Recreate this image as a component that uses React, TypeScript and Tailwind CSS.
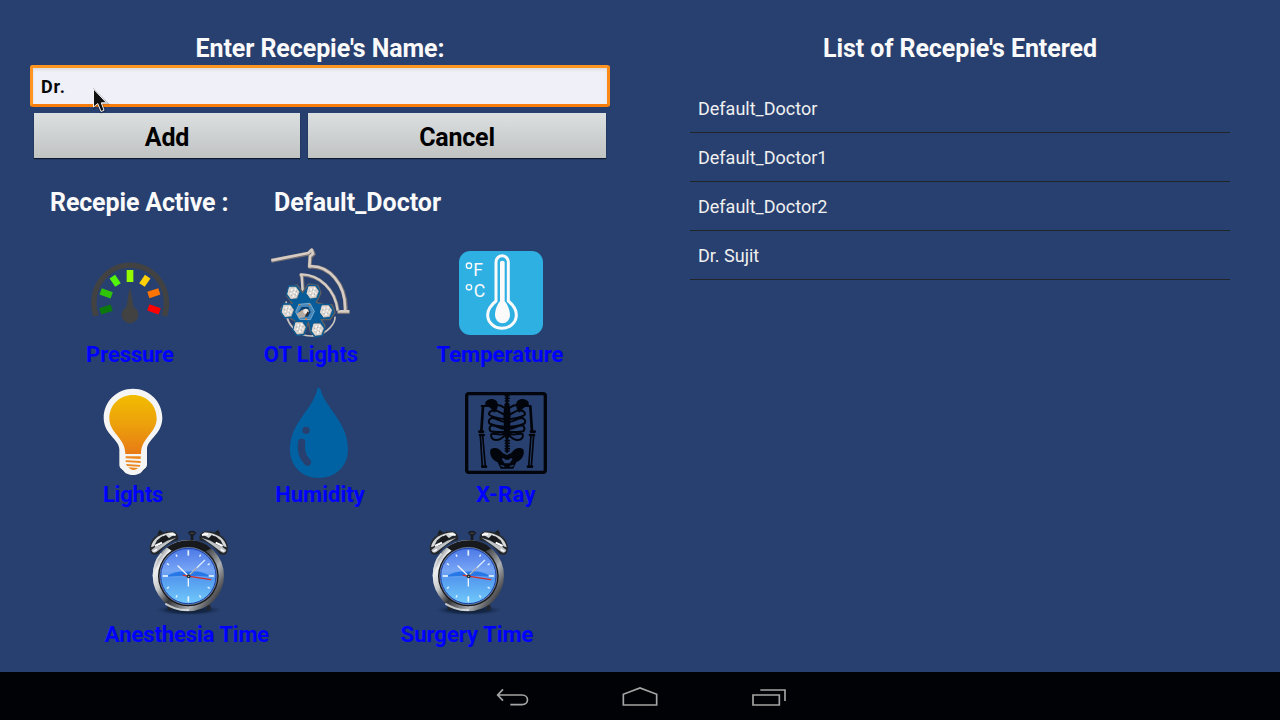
import type { ReactNode } from "react";

const recipes = ["Default_Doctor", "Default_Doctor1", "Default_Doctor2", "Dr. Sujit"];

function Tile({ label, className, children }: { label: string; className: string; children: ReactNode }) {
  return (
    <div className={`flex h-[130px] shrink-0 flex-col items-center ${className}`}>
      <div className="h-[100px] w-full">{children}</div>
      <div className="h-[30px] whitespace-nowrap text-[22px] leading-[30px] font-bold text-[#0000ff]">{label}</div>
    </div>
  );
}

function Gauge() {
  return (
    <svg className="block h-full w-full" viewBox="-15 0 330 300">
      <path d="M48 228A109 114 0 1 1 253 228" fill="none" stroke="#424242" strokeWidth="16" />
      <g strokeWidth="20">
        <path d="M61 214L95 203" stroke="#0b7a0b" />
        <path d="M62 154L95 166" stroke="#2fc40a" />
        <path d="M97 110L114 135" stroke="#52f50a" />
        <path d="M150 90V126" stroke="#94fb00" />
        <path d="M203 110L186 135" stroke="#ffd008" />
        <path d="M238 154L205 165" stroke="#ff7300" />
        <path d="M239 214L205 202" stroke="#ff0000" />
      </g>
      <path d="M150 142C154 158 157 180 161 202A25 25 0 1 1 139 202C143 180 146 158 150 142Z" fill="#424242" />
    </svg>
  );
}

const lampHeads = [
  [115, 158],
  [173, 156],
  [213, 213],
  [188, 268],
  [134, 264],
  [98, 212],
];

function SurgicalLamp() {
  return (
    <svg className="block h-full w-full" viewBox="3 0 330 300">
      <g fill="none" strokeLinejoin="round">
        <path d="M49 62L160 41L171 31L176 42L166 51L164 81C220 75 276 132 272 215M247 216H284" stroke="#777174" strokeWidth="12" />
        <path d="M49 61L160 39L170 29L174 41L165 49L163 79C220 74 274 132 270 213M248 214H283" stroke="#d6ccc3" strokeWidth="8" />
        <path d="M144 155L142 110L137 105C194 104 242 149 249 213" stroke="#77767a" strokeWidth="10" />
        <path d="M143 154L140 110L138 103C194 103 240 149 248 212" stroke="#d6ccc3" strokeWidth="7" />
        <path d="M94 184C82 255 133 294 180 287C219 282 242 247 240 230" stroke="#c9c2bd" strokeWidth="5" />
      </g>
      <path d="M102 139L126 135L143 157L160 132L189 136L198 158L184 187L205 193L232 195L240 218L225 239L199 239L210 256L205 282L184 290L166 276L160 246L151 275L132 287L115 271L120 243L104 234L83 225L77 207L88 193L111 190L96 168Z" fill="#075c99" stroke="#625f61" strokeWidth="4" />
      {lampHeads.map(([x, y], i) => (
        <g key={i} transform={`translate(${x} ${y})`}>
          <path d="M-13 -20L9 -20L21 -3L13 19L-8 22L-20 5Z" fill="#a9a19f" stroke="#075b94" strokeWidth="4" />
          <path d="M-13 -16L8 -16L17 -3L9 16L-8 18L-18 4Z" fill="#ddd6d1" />
          <path d="M-7 -8H-2M4 -10H8M-9 3H-5M1 -1H5M8 4H11M-2 10H3" stroke="#ffffff" strokeWidth="5" />
          <path d="M-2 -6H1M-7 8H-4M4 7H7M-11 -3H-8M8 -4H11" stroke="#9db1b4" strokeWidth="3" />
        </g>
      ))}
      <path d="M132 193L165 190L178 214L166 239L134 238L122 216Z" fill="#4386b9" stroke="#78acd1" strokeWidth="3" />
      <path d="M140 201L160 201L167 216L159 230H139L131 216Z" fill="#083f70" />
      <path d="M125 222L142 209L153 206L159 218L148 232L132 235Z" fill="#b5aaa1" />
      <circle cx="153" cy="214" r="8" fill="#ece4dc" />
      <path d="M160 216L153 228" stroke="#302c2e" strokeWidth="5" />
      <path d="M131 194h5M161 194h5M150 237h6" stroke="#e87d27" strokeWidth="4" />
    </svg>
  );
}

function Thermometer() {
  return (
    <svg className="block h-full w-full" viewBox="0 0 420 300">
      <rect x="87" y="33" width="252" height="252" rx="34" fill="#2fb0e3" />
      <path d="M198 183V66a18.500 18.500 0 0 1 37 0V183C251 196 259 211 259 225A42 39 0 0 1 173 225C173 211 182 196 198 183Z" fill="none" stroke="#fafafa" strokeWidth="9" />
      <path d="M210 67Q210 62 217 62T224 67V184C231 190 240 210 240 226A22 23 0 0 1 195 226C195 210 203 190 210 184Z" fill="#fafafa" />
      <circle cx="117" cy="77" r="8" fill="none" stroke="#fafafa" strokeWidth="4" />
      <circle cx="117" cy="142" r="8" fill="none" stroke="#fafafa" strokeWidth="4" />
      <text x="130" y="107" fill="#fafafa" fontFamily="Roboto, sans-serif" fontWeight="400" fontSize="53">F</text>
      <text x="131" y="171" fill="#fafafa" fontFamily="Roboto, sans-serif" fontWeight="400" fontSize="53">C</text>
    </svg>
  );
}

function Bulb() {
  return (
    <svg className="block h-full w-full" viewBox="-6 0 330 300">
      <defs>
        <linearGradient id="bulb" x1="0" y1="0" x2="0" y2="1">
          <stop offset="0" stopColor="#f2bc00" />
          <stop offset="0.5" stopColor="#eca00b" />
          <stop offset="1" stopColor="#e87a15" />
        </linearGradient>
      </defs>
      <path d="M159 29C208 29 246 67 246 115C246 166 202 179 202 210V255C202 266 195 268 190 273C180 288 138 288 128 273C122 268 118 266 118 255V210C118 179 71 166 71 115C71 67 110 29 159 29Z" fill="#203458" opacity=".6" />
      <path d="M159 26C208 26 247 65 247 113C247 164 201 177 201 208V253C201 264 194 266 189 271C179 290 139 290 129 271C123 266 118 264 118 253V208C118 177 71 164 71 113C71 65 110 26 159 26Z" fill="#f5f5f5" />
      <path d="M159 45C199 45 230 75 230 115C230 160 183 173 183 222H136C136 173 88 160 88 115C88 75 119 45 159 45Z" fill="url(#bulb)" />
      <path d="M137 229H182V237L137 235ZM137 241L182 243V249L137 246ZM138 252L181 255L179 260L141 258ZM145 262L174 264Q167 271 159 270Q151 270 145 262Z" fill="#ec8820" />
    </svg>
  );
}

function Drop() {
  return (
    <svg className="block h-full w-full" viewBox="0 0 330 300">
      <path d="M157 26Q161 20 166 27C181 85 249 126 249 208C249 260 211 294 161 294C112 294 75 260 75 208C75 126 146 87 157 26Z" fill="#0062a3" />
      <circle cx="123" cy="151" r="11" fill="#28406f" />
      <path d="M110 187Q104 222 127 246" fill="none" stroke="#28406f" strokeWidth="22" strokeLinecap="round" />
    </svg>
  );
}

function Skeleton() {
  return (
    <svg className="block h-full w-full" viewBox="3 0 330 300">
      <rect x="50" y="41" width="236" height="236" rx="7" fill="none" stroke="#02050b" strokeWidth="10" />
      <g fill="#02050b">
        <path d="M106 67C114 55 130 55 139 62C148 71 143 90 133 98C128 89 118 80 106 75Z" />
        <path d="M236 67C228 55 212 55 203 62C194 71 199 90 209 98C214 89 224 80 236 75Z" />
        <path d="M164 70H178L182 102L179 170L171 180L163 170L160 102Z" />
        <path d="M122 208C134 199 149 205 158 219L171 225L184 219C193 205 208 199 220 208C226 226 213 242 199 247L190 266H152L143 247C129 242 116 226 122 208Z" />
      </g>
      <g fill="none" stroke="#02050b" strokeLinecap="round" strokeLinejoin="round">
        <path d="M166 47H177M166 55H178M166 63H177M166 182H178M166 190H178M166 198H178M166 206H178M166 213H177" strokeWidth="5" />
        <path d="M171 46V216" strokeWidth="7" />
        <path d="M95 78L130 77M212 77L240 78" strokeWidth="6" />
        <path d="M164 84Q151 74 141 75M178 84Q191 74 201 75M164 104C152 99 145 91 132 91Q117 93 117 103Q120 110 164 118M178 104C190 99 197 91 210 91Q225 93 225 103Q222 110 178 118M165 126C148 125 140 113 125 114Q113 119 118 130Q130 137 164 140M177 126C194 125 202 113 217 114Q229 119 224 130Q212 137 178 140M165 146C148 148 136 133 123 137Q115 145 122 154Q136 158 165 155M177 146C194 148 206 133 219 137Q227 145 220 154Q206 158 177 155M164 160C150 170 132 157 124 162Q121 178 137 180Q151 181 164 166M178 160C192 170 210 157 218 162Q221 178 205 180Q191 181 178 166" strokeWidth="6" />
        <path d="M99 79L94 154M241 79L246 154" strokeWidth="8" />
        <path d="M91 167L97 260M98 167L106 260M251 167L244 260M243 167L236 260" strokeWidth="5" />
        <path d="M88 155H99M90 165H101M243 155H254M240 165H252M97 260H108M234 260H246" strokeWidth="8" />
      </g>
      <path d="M155 237Q160 232 166 239H177Q182 232 188 237L179 250H164Z" fill="#28406f" />
      <path d="M152 256L163 260M180 260L191 256" stroke="#28406f" strokeWidth="4" />
    </svg>
  );
}

function Bell() {
  return (
    <g>
      <path d="M190 44L195 35L203 42" fill="none" stroke="#1b1e23" strokeWidth="7" />
      <path d="M169 101C158 83 168 58 184 47C202 37 226 29 241 37Q253 46 249 61C224 65 207 79 190 102Q176 107 169 101Z" fill="#24272b" />
      <path d="M168 82C172 56 196 40 234 37L241 42L222 54L202 49L186 61L177 79Z" fill="#d5d8d9" />
      <path d="M196 53L213 45L223 56L206 66L190 70Z" fill="#17191c" />
      <path d="M169 90Q178 80 195 75L217 62L244 53Q222 66 184 96Q172 102 169 90Z" fill="#bfc3c5" />
      <path d="M180 78L201 68M224 42L242 45" stroke="#ffffff" strokeWidth="6" />
      <path d="M175 94L186 88" stroke="#ffffff" strokeWidth="4" />
    </g>
  );
}

const ticks = Array.from({ length: 12 }, (_, i) => i);

function AlarmClock({ id }: { id: string }) {
  return (
    <svg className="block h-full w-full" viewBox="6 0 540 300">
      <defs>
        <linearGradient id={`${id}-ring`} x1="0" y1="0.15" x2="1" y2="0.85">
          <stop offset="0" stopColor="#17191c" />
          <stop offset="0.16" stopColor="#f0f1f2" />
          <stop offset="0.3" stopColor="#c6c8ca" />
          <stop offset="0.48" stopColor="#333539" />
          <stop offset="0.72" stopColor="#aeb1b4" />
          <stop offset="0.86" stopColor="#5c5e61" />
          <stop offset="1" stopColor="#191a1d" />
        </linearGradient>
        <linearGradient id={`${id}-face`} x1="0" y1="0" x2="0" y2="1">
          <stop offset="0" stopColor="#4c78e6" />
          <stop offset="0.4" stopColor="#77a5f5" />
          <stop offset="0.55" stopColor="#549aef" />
          <stop offset="1" stopColor="#71cafa" />
        </linearGradient>
        <radialGradient id={`${id}-shade`}>
          <stop offset="0" stopColor="#071425" />
          <stop offset="0.6" stopColor="#122543" stopOpacity="0.8" />
          <stop offset="1" stopColor="#28406f" stopOpacity="0" />
        </radialGradient>
      </defs>
      <ellipse cx="281" cy="270" rx="107" ry="17" fill={`url(#${id}-shade)`} />
      <path d="M223 255L225 270M340 255L341 270" stroke="#22252a" strokeWidth="12" />
      <path d="M291 40V64" stroke="#17191d" strokeWidth="8" />
      <path d="M281 40Q281 34 291 34T302 40Q296 46 291 46T281 40Z" fill="#30343a" stroke="#0f1114" strokeWidth="3" />
      <ellipse cx="280" cy="167" rx="107" ry="107" fill={`url(#${id}-ring)`} />
      <path d="M215 82Q249 58 289 61Q326 63 348 86L330 94Q282 67 231 93Z" fill="#17191d" />
      <path d="M176 169Q176 125 199 101M211 251Q244 273 282 270" fill="none" stroke="#e4e6e7" strokeWidth="6" opacity="0.8" />
      <Bell />
      <g transform="translate(563 0) scale(-1 1)">
        <Bell />
      </g>
      <circle cx="280" cy="168" r="91" fill="#17191d" />
      <circle cx="280" cy="168" r="87" fill="#6f7f98" />
      <circle cx="280" cy="168" r="83" fill={`url(#${id}-face)`} stroke="#1b43b0" strokeWidth="3" />
      <path d="M211 170Q241 151 276 155Q317 150 349 170Q280 164 211 170Z" fill="#2877e6" />
      <g stroke="#e9f4ff">
        {ticks.map((i) => (
          <path
            key={i}
            d={i % 3 === 0 ? "M280 91V107" : "M280 94V101"}
            strokeWidth={i % 3 === 0 ? 5 : 4}
            transform={`rotate(${i * 30} 280 168)`}
          />
        ))}
      </g>
      <g fill="none" strokeLinecap="round">
        <path d="M280 168L249 138M280 168V198" stroke="#eef5fc" strokeWidth="4" />
        <path d="M280 168L329 121" stroke="#dceaff" strokeWidth="4" />
        <path d="M281 168L305 144" stroke="#3e424c" strokeWidth="2" />
        <path d="M265 166L347 179" stroke="#d52d29" strokeWidth="4" />
      </g>
      <circle cx="281" cy="169" r="6" fill="#292c32" />
      <circle cx="281" cy="169" r="2" fill="#d0d4d8" />
    </svg>
  );
}

function NavigationBar() {
  return (
    <nav className="flex h-12 items-center bg-[#000205] pl-[480px]">
      <div className="grid h-12 w-80 grid-cols-[64px_192px_64px] items-center">
        <button aria-label="Back" className="h-12 w-16">
          <svg className="block h-full w-full" viewBox="0 6 192 144" fill="none" stroke="#a5a5a5" strokeWidth="5">
            <path d="M69 58L53 75L69 92M53 75H126C148 75 148 104 126 104H91" />
          </svg>
        </button>
        <button aria-label="Home" className="h-12 w-16 justify-self-center">
          <svg className="block h-full w-full" viewBox="384 6 192 144" fill="none" stroke="#a5a5a5" strokeWidth="5">
            <path d="M430 105V73L480 54L530 73V105Z" />
          </svg>
        </button>
        <button aria-label="Recent apps" className="h-12 w-16">
          <svg className="block h-full w-full" viewBox="768 6 192 144" fill="none" stroke="#a5a5a5" strokeWidth="5">
            <path d="M819 75H898V105H819ZM841 60H915V93" />
          </svg>
        </button>
      </div>
    </nav>
  );
}

export default function App() {
  return (
    <div className="relative flex h-[720px] w-[1280px] flex-col overflow-hidden bg-[#28406f] font-['Roboto',sans-serif]">
      <main className="flex h-[672px]">
        <section className="w-[640px] pt-8">
          <h1 className="h-[33px] text-center text-[25px] leading-[33px] font-bold tracking-[-0.08px] text-[#fafafa]">
            Enter Recepie's Name:
          </h1>
          <div className="mx-[30px] h-[42px] rounded-[3px] border-[3px] border-t-[#ff9420] border-r-[#fb8a18] border-b-[#f87c0b] border-l-[#ff9420] bg-[#f0f0f8] px-2 text-[18px] leading-[37px] font-bold tracking-[0.9px] text-[#080808] shadow-[inset_0_2px_3px_#dedede]">
            Dr.
          </div>
          <div className="mt-1.5 ml-[34px] flex gap-2">
            <button className="h-[45px] w-[266px] bg-linear-to-b from-[#dce0e0] to-[#c1c3c3] pt-[5px] text-[25px] leading-[40px] font-bold tracking-[-0.2px] text-black shadow-[0_1px_1px_#0b182d]">
              Add
            </button>
            <button className="h-[45px] w-[298px] bg-linear-to-b from-[#dce0e0] to-[#c1c3c3] pt-[5px] text-[25px] leading-[40px] font-bold tracking-[-0.2px] text-black shadow-[0_1px_1px_#0b182d]">
              Cancel
            </button>
          </div>
          <div className="mt-7 flex h-[34px] pl-[50px] text-[25px] leading-[34px] font-bold text-[#fafafa]">
            <span className="w-56 tracking-[-0.14px]">Recepie Active :</span>
            <span>Default_Doctor</span>
          </div>
          <div className="mt-5 flex flex-col gap-2.5">
            <div className="flex pl-[75px]">
              <Tile label="Pressure" className="w-[110px] tracking-[-0.1px]"><Gauge /></Tile>
              <Tile label="OT Lights" className="ml-[71px] w-[110px]"><SurgicalLamp /></Tile>
              <Tile label="Temperature" className="ml-[64px] w-[140px]"><Thermometer /></Tile>
            </div>
            <div className="flex pl-[78px]">
              <Tile label="Lights" className="w-[110px] tracking-[-0.2px]"><Bulb /></Tile>
              <Tile label="Humidity" className="ml-[77px] w-[110px]"><Drop /></Tile>
              <Tile label="X-Ray" className="ml-[76px] w-[110px] tracking-[0.4px]"><Skeleton /></Tile>
            </div>
            <div className="flex gap-[100px] pl-[97px]">
              <Tile label="Anesthesia Time" className="w-[180px] tracking-[-0.1px]"><AlarmClock id="anesthesia" /></Tile>
              <Tile label="Surgery Time" className="w-[180px]"><AlarmClock id="surgery" /></Tile>
            </div>
          </div>
        </section>
        <section className="w-[640px] pt-8 pr-[50px] pl-[50px]">
          <h2 className="h-[33px] text-center text-[25px] leading-[33px] font-bold tracking-[-0.06px] text-[#fafafa]">
            List of Recepie's Entered
          </h2>
          <ul className="mt-[19px]">
            {recipes.map((name) => (
              <li key={name} className="h-[49px] border-b border-[#232629] px-2 text-[18px] leading-[49px] text-[#f0f0f0]">
                {name}
              </li>
            ))}
          </ul>
        </section>
      </main>
      <NavigationBar />
      <svg className="pointer-events-none absolute top-[87px] left-[90px] h-[28px] w-[20px]" viewBox="0 0 20 28">
        <path d="M4 3V21L8 18L11 25.500L15 24L12 16.500H17.500Z" fill="#000000" opacity="0.2" stroke="#000000" strokeWidth="2" />
        <path d="M3.500 2V20L7.800 16.500L11 24.500L14 23.200L11.300 15.800H16.500Z" fill="#111111" stroke="#f2f2f2" strokeWidth="1" />
      </svg>
    </div>
  );
}
